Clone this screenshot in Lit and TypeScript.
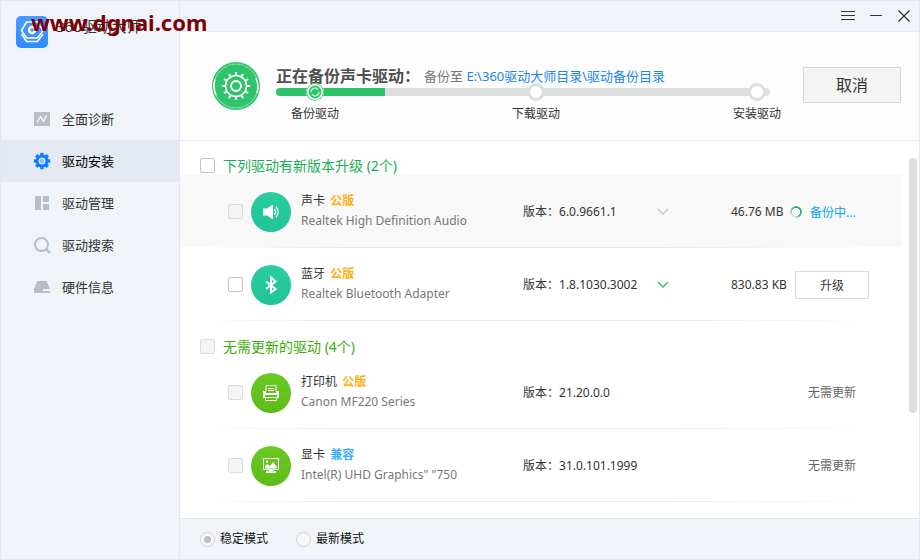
import { LitElement, html, svg, css, nothing } from "lit";
import { customElement, property } from "lit/decorators.js";
import { classMap } from "lit/directives/class-map.js";

interface Driver {
  id: string;
  kind: string;
  tag: string;
  compat?: boolean;
  name: string;
  version: string;
  icon: string;
  green?: boolean;
  chevron?: "idle" | "on";
  size?: string;
  action: "backup" | "upgrade" | "none";
  locked?: boolean;
}

const NAV = [
  { label: "全面诊断", icon: "diagnose" },
  { label: "驱动安装", icon: "gear", active: true },
  { label: "驱动管理", icon: "manage" },
  { label: "驱动搜索", icon: "search" },
  { label: "硬件信息", icon: "disk" },
];

const STEPS = ["备份驱动", "下载驱动", "安装驱动"];

const UPGRADABLE: Driver[] = [
  { id: "audio", kind: "声卡", tag: "公版", name: "Realtek High Definition Audio", version: "6.0.9661.1", icon: "sound", chevron: "idle", size: "46.76 MB", action: "backup", locked: true },
  { id: "bluetooth", kind: "蓝牙", tag: "公版", name: "Realtek Bluetooth Adapter", version: "1.8.1030.3002", icon: "bluetooth", chevron: "on", size: "830.83 KB", action: "upgrade" },
];

const CURRENT: Driver[] = [
  { id: "printer", kind: "打印机", tag: "公版", name: "Canon MF220 Series", version: "21.20.0.0", icon: "printer", green: true, action: "none", locked: true },
  { id: "display", kind: "显卡", tag: "兼容", compat: true, name: 'Intel(R) UHD Graphics" "750', version: "31.0.101.1999", icon: "display", green: true, action: "none", locked: true },
];

const teeth = (n: number, r1: number, r2: number, w: number, c: number) =>
  Array.from({ length: n }, (_, i) => svg`<rect x=${c - w / 2} y=${c - r2} width=${w} height=${r2 - r1} fill="currentColor" transform=${`rotate(${(360 / n) * i} ${c} ${c})`} />`);

const GLYPHS: Record<string, unknown> = {
  diagnose: svg`<path d="M0 1h16v14H0z" fill="currentColor"/><path d="M3 11.500 6.500 5.500l3 5L12.500 4.500" fill="none" stroke="#f0f4f8" stroke-width="1.500"/>`,
  gear: svg`<circle cx="8" cy="8" r="4.900" fill="none" stroke="currentColor" stroke-width="2.800"/>${teeth(8, 5, 8.2, 3.4, 8)}<circle cx="8" cy="8" r="2.200" fill="#8dbdf8"/>`,
  manage: svg`<path d="M1 1h6v14H1zM9 1h6v6H9zM9 9h6v6H9z" fill="currentColor"/>`,
  search: svg`<circle cx="7.500" cy="7.500" r="6.500" fill="none" stroke="currentColor" stroke-width="2"/><path d="m12 12 4 4" stroke="currentColor" stroke-width="2.400"/>`,
  disk: svg`<path d="M3.500 2h9L16 9.500v.500H9V14H0V9.500z" fill="currentColor"/><path d="M9.500 12H16v2H9z" fill="currentColor"/>`,
  sound: svg`<path d="M0 4.500h4L10 .500v15L4 11.500H0z" fill="currentColor"/><path d="M11.500 5q2 3 0 6M13 2.500q4 5.500 0 11" fill="none" stroke="currentColor" stroke-width="1.300"/>`,
  bluetooth: svg`<path d="M3 4.500 12.500 12 8 15.500V.500L12.500 4.500 3 12" fill="none" stroke="currentColor" stroke-width="2"/>`,
  printer: svg`<path d="M3 6V.500h10V6" fill="none" stroke="currentColor"/><path d="M5 3.500h6M5 5.500h6" stroke="currentColor"/><path d="M0 6h3v2h10V6h3v7h-2v-3H2v3H0z" fill="currentColor"/><path d="M2.500 12.500h11v3h-11z" fill="none" stroke="currentColor"/>`,
  display: svg`<path d="M.5 .5h15v11H.5z" fill="none" stroke="currentColor"/><path d="M2 10.500V8l2.500-2L7 8l3-4 3.500 4v2.500z" fill="currentColor"/><path d="M3 2.500h2v2H3zM6 12h4v1h3v2H3v-2h3z" fill="currentColor"/>`,
};

const glyph = (name: string) => html`<svg class="glyph" viewBox="0 0 16 16" width="16" height="16" aria-hidden="true">${GLYPHS[name]}</svg>`;

const glyphCss = css`
  .glyph { display: block; flex: none; overflow: visible; }
  .text { padding-bottom: 2px; }
  * { box-sizing: border-box; }
`;

const tickCss = css`
  .tick {
    appearance: none; flex: none; width: 15px; height: 15px; margin: 0;
    border: 1px solid #c4c4c4; border-radius: 2px; background: #fff;
  }
  .tick:disabled { border-color: #dcdcdc; background: #f4f4f4; }
`;

@customElement("driver-row")
export class DriverRow extends LitElement {
  @property({ attribute: false }) driver!: Driver;

  static styles = [glyphCss, tickCss, css`
    :host { display: block; }
    .row {
      display: grid; grid-template-columns: 15px 48px minmax(0, 232fr) minmax(0, 134fr) minmax(0, 74fr) 138px;
      align-items: center; height: 73px; padding: 0 33px 0 48px; font-size: 12px; color: #333;
      background: linear-gradient(90deg, #fff 20px, #e9e9e9 160px, #e9e9e9 480px, #fff 700px) bottom / 100% 1px no-repeat;
    }
    .busy { background-color: #f8f8f8; }
    .disc {
      display: grid; place-items: center; width: 40px; height: 40px; margin-left: 8px;
      border-radius: 50%; color: #fff; background: linear-gradient(#2bcda1, #1fc495);
    }
    .disc.green { background: linear-gradient(#6bca24, #5cbc18); }
    .info { padding: 0 0 2px 10px; line-height: 20px; white-space: nowrap; }
    .name { color: #777; }
    .tag { margin-left: 2px; font-weight: 700; color: #ffb018; }
    .tag.compat { color: #38b0ff; }
    .toggle { justify-self: start; width: 12px; height: 12px; padding: 0; border: 0; background: none; color: #c4c4c4; }
    .toggle.on { color: #1fbf63; }
    .toggle svg { display: block; }
    .tail { display: flex; align-items: center; justify-content: space-between; grid-column: 6; white-space: nowrap; }
    .status { display: flex; align-items: center; gap: 8px; width: 79px; color: #00a8f0; }
    .upgrade { width: 74px; height: 28px; padding: 0; border: 1px solid #d8d8d8; background: #fff; color: #333; font: inherit; }
    .none { width: 74px; margin-left: auto; text-align: center; color: #666; }
    .ring { width: 12px; height: 12px; border-radius: 50%; background: conic-gradient(#14a97a, #2fb58b 35%, #d8f0e8 55%, #a5dccb 75%, #14a97a); mask: radial-gradient(circle, transparent 4px, #000 4px); }
  `];

  render() {
    const d = this.driver;
    return html`
      <div class=${classMap({ row: true, busy: d.action === "backup" })}>
        <input class="tick" type="checkbox" aria-label=${d.name} ?disabled=${d.locked}>
        <div class=${classMap({ disc: true, green: !!d.green })}>${glyph(d.icon)}</div>
        <div class="info">
          <div>${d.kind} <span class=${classMap({ tag: true, compat: !!d.compat })}>${d.tag}</span></div>
          <div class="name">${d.name}</div>
        </div>
        <div class="text">版本：${d.version}</div>
        ${d.chevron ? html`
          <button class=${classMap({ toggle: true, on: d.chevron === "on" })} aria-label="选择版本">
            <svg width="12" height="12" viewBox="0 0 12 12"><path d="m1 3 5 5 5-5" fill="none" stroke="currentColor" stroke-width="1.300"/></svg>
          </button>` : nothing}
        <div class="tail">
          ${d.size ? html`<span>${d.size}</span>` : nothing}
          ${d.action === "backup" ? html`<span class="status"><i class="ring"></i>备份中...</span>`
            : d.action === "upgrade" ? html`<button class="upgrade">升级</button>`
            : html`<span class="none text">无需更新</span>`}
        </div>
      </div>`;
  }
}

@customElement("app-root")
export class AppRoot extends LitElement {
  static styles = [glyphCss, tickCss, css`
    :host {
      display: block; font-family: "Noto Sans", "Noto Sans CJK SC", sans-serif; font-size: 12px; color: #333;
    }
    .window { position: relative; display: grid; grid-template-columns: 179px minmax(0, 1fr); height: 100vh; border: 1px solid #e3e7ef; background: #f0f4f8; }
    .side { border-right: 1px solid #e3e7ef; }
    .brand { display: flex; gap: 8px; height: 97px; padding: 15px 0 0 15px; font-size: 15px; line-height: 20px; }
    .logo { flex: none; display: block; }
    .watermark { position: absolute; left: 30px; top: 7px; font: 700 22px/28px "Noto Sans", sans-serif; color: #7c0004; }
    .nav { display: block; }
    .link { display: flex; align-items: center; gap: 12px; height: 42px; padding-left: 33px; font-size: 13px; color: #333; text-decoration: none; }
    .link .glyph { color: #b8bdc2; }
    .link.active { background: #e3e8f1; color: #000; }
    .link.active .glyph { color: #0a7cff; }
    .main { display: flex; flex-direction: column; min-width: 0; min-height: 0; }
    .bar { display: flex; justify-content: flex-end; gap: 12px; height: 31px; padding: 6px 7px 0 0; border-bottom: 1px solid #e8ebf0; }
    .win { width: 16px; height: 18px; padding: 0; border: 0; background: none; color: #333; }
    .head { display: flex; height: 109px; padding: 0 18px 0 32px; border-bottom: 1px solid #e9ebed; background: #fdfdfd; }
    .emblem { flex: none; margin-top: 30px; }
    .progress { flex: 1; min-width: 0; padding: 30px 0 0 16px; }
    .title { display: flex; align-items: center; gap: 4px; height: 26px; margin: 0; white-space: nowrap; font-size: 13px; font-weight: 400; color: #777; }
    .title b { font-size: 16px; font-weight: 700; color: #505050; }
    .path { color: #1a86e8; text-decoration: none; }
    .steps { display: grid; }
    .track { grid-area: 1 / 1; height: 8px; margin-right: 11px; border-radius: 4px; background: #dcdfde; overflow: hidden; }
    .fill { height: 100%; background: #2fc46c; }
    .stops { grid-area: 1 / 1; display: flex; justify-content: space-between; margin: -5px 0 0; padding: 0 0 0 15px; list-style: none; }
    .stop { display: flex; flex-direction: column; align-items: center; gap: 4px; z-index: 1; line-height: 18px; }
    .dot { display: block; width: 18px; height: 18px; border: 3px solid #dcdfde; border-radius: 50%; background: #fff; }
    .dot.done { border: 0; }
    .cancel { flex: none; width: 98px; height: 36px; margin: 35px 0 0 22px; padding: 0 0 2px; border: 1px solid #d6d8d8; background: #f4f4f4; color: #333; font: 16px "Noto Sans", "Noto Sans CJK SC", sans-serif; }
    .body { display: flex; flex: 1; min-height: 0; gap: 7px; padding-right: 2px; background: #fff; overflow: hidden; }
    .list { flex: 1; display: flex; flex-direction: column; gap: 1px; min-width: 0; }
    .group { display: flex; align-items: center; gap: 8px; height: 34px; padding: 15px 0 0 20px; font-size: 14px; line-height: 18px; color: #1aae54; }
    .group.current { color: #3aae08; }
    .thumb { width: 8px; height: 255px; margin-top: 17px; border-radius: 4px; background: #dedede; }
    .foot { display: flex; align-items: center; gap: 28px; height: 41px; padding-left: 20px; border-top: 1px solid #e3e6ea; color: #111; }
    .mode { display: flex; align-items: center; gap: 5px; }
    .radio { appearance: none; width: 15px; height: 15px; margin: 0; border: 1px solid #d2d2d2; border-radius: 50%; background: #f6f6f6; }
    .radio:checked { background: radial-gradient(circle, #bdbdbd 3px, #f8f8f8 4px); }
  `];

  render() {
    return html`
      <div class="window">
        <aside class="side">
          <div class="brand">
            <svg class="logo" width="32" height="32" viewBox="0 0 32 32" aria-hidden="true">
              <defs><linearGradient id="sky" x2="0" y2="1"><stop stop-color="#4c9cff"/><stop offset="1" stop-color="#2f8bff"/></linearGradient></defs>
              <rect width="32" height="32" rx="5" fill="url(#sky)"/>
              <g fill="none" stroke="#fff" stroke-width="1.500">
                <path d="M10.500 6h11L27 14.500 21.500 22h-11L5.500 14.500z"/>
                <path d="m5.500 18 5 7.500h11L27 18"/>
                <circle cx="16" cy="14" r="3" stroke-width="2.500"/>
              </g>
            </svg>
            <span>360驱动大师</span>
          </div>
          <nav class="nav">
            ${NAV.map((n) => html`<a href="#" class=${classMap({ link: true, active: !!n.active })}>${glyph(n.icon)}<span class="text">${n.label}</span></a>`)}
          </nav>
        </aside>
        <main class="main">
          <div class="bar">
            <button class="win" aria-label="菜单"><svg class="glyph" width="16" height="18" viewBox="0 0 16 18"><path d="M1 4.500h14M1 8.500h14M1 12.500h14" stroke="currentColor"/></svg></button>
            <button class="win" aria-label="最小化"><svg class="glyph" width="16" height="18" viewBox="0 0 16 18"><path d="M2 8.500h12" stroke="currentColor"/></svg></button>
            <button class="win" aria-label="关闭"><svg class="glyph" width="16" height="18" viewBox="0 0 16 18"><path d="m2.500 3.500 11 11m0-11-11 11" stroke="currentColor" stroke-width="1.200"/></svg></button>
          </div>
          <header class="head">
            <svg class="emblem" width="48" height="48" viewBox="0 0 48 48" color="#fff" aria-hidden="true">
              <circle cx="24" cy="24" r="24" fill="#2fc46c"/>
              <circle cx="24" cy="24" r="22" fill="none" stroke="#8fe0b0" stroke-width="1"/>
              <path d="M3 17.500A22 22 0 0 0 4 33M45 31a22 22 0 0 0-1-15" fill="none" stroke="#fff" stroke-width="1.500"/>
              <circle cx="24" cy="24" r="10.500" fill="none" stroke="#fff" stroke-width="1.500"/>
              ${teeth(12, 11, 14, 2, 24)}
              <circle cx="24" cy="24" r="5" fill="none" stroke="#fff" stroke-width="2"/>
            </svg>
            <div class="progress">
              <h1 class="title"><b>正在备份声卡驱动：</b><span>备份至 <a class="path" href="#">E:\\360驱动大师目录\\驱动备份目录</a></span></h1>
              <div class="steps">
                <div class="track"><div class="fill" style="width:22%"></div></div>
                <ol class="stops">
                  ${STEPS.map((s, i) => html`<li class="stop">${i === 0
                    ? html`<svg class="dot done" viewBox="0 0 18 18"><circle cx="9" cy="9" r="9" fill="#2fc46c"/><circle cx="9" cy="9" r="7.200" fill="#2fc46c" stroke="#fff" stroke-width="1.600"/><path d="M5 9a4 4 0 0 1 7-2.500M13 9a4 4 0 0 1-7 2.500" fill="none" stroke="#c5f0d6" stroke-width="1.500"/></svg>`
                    : html`<span class="dot"></span>`}${s}</li>`)}
                </ol>
              </div>
            </div>
            <button class="cancel">取消</button>
          </header>
          <div class="body">
            <div class="list">
              <section>
                <label class="group"><input class="tick" type="checkbox">下列驱动有新版本升级 (2个)</label>
                ${UPGRADABLE.map((d) => html`<driver-row .driver=${d}></driver-row>`)}
              </section>
              <section>
                <label class="group current"><input class="tick" type="checkbox" disabled>无需更新的驱动 (4个)</label>
                ${CURRENT.map((d) => html`<driver-row .driver=${d}></driver-row>`)}
              </section>
            </div>
            <div class="thumb"></div>
          </div>
          <footer class="foot">
            <label class="mode"><input class="radio" type="radio" name="mode" checked><span class="text">稳定模式</span></label>
            <label class="mode"><input class="radio" type="radio" name="mode"><span class="text">最新模式</span></label>
          </footer>
        </main>
        <div class="watermark">www.dgnai.com</div>
      </div>`;
  }
}
